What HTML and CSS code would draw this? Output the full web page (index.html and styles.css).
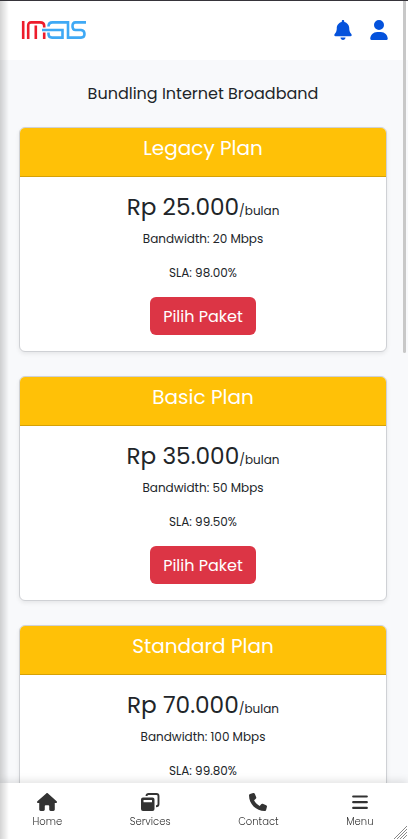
FILE: index.html
```html
<!DOCTYPE html>
<html lang="id">
<head>
<meta charset="utf-8">
<title>IMGIS</title>
<link rel="stylesheet" href="styles.css">
</head>
<body>
<header class="topbar">
  <svg class="logo" viewBox="0 0 66 20" fill="none" stroke-width="2.6">
    <g stroke="#ed1c2b"><path d="M2.2 1v18M7.200 19V5.500Q7.200 2.400 10.300 2.400H19Q23.200 2.400 23.200 6V7.500M14.800 5.500V19M23.200 12.500v6.500"/></g>
    <g stroke="#3fa9f5"><path d="M43 2.400H31.500Q27.500 2.400 27.500 6.500M27.500 12.500V14Q27.500 17.600 31 17.600H41.500V10H21M43 2.400H47V17.600H60Q63.500 17.600 63.500 14T60 10H54.500Q51.500 10 51.500 6.200T54.500 2.400H65"/></g>
  </svg>
  <div class="actions">
    <svg class="bell" viewBox="0 0 448 512"><path d="M224 0c-17.700 0-32 14.300-32 32V51.200C119 66 64 130.600 64 208v18.800c0 47-17.300 92.400-48.500 127.600l-7.400 8.300c-8.400 9.400-10.400 22.900-5.300 34.400S19.400 416 32 416H416c12.600 0 24-7.400 29.200-18.900s3.100-25-5.300-34.400l-7.400-8.300C401.300 319.200 384 273.900 384 226.800V208c0-77.400-55-142-128-156.800V32c0-17.700-14.300-32-32-32zm45.300 493.300c12-12 18.700-28.300 18.700-45.300H160c0 17 6.700 33.300 18.700 45.300s28.300 18.700 45.300 18.700s33.300-6.700 45.300-18.700z"/></svg>
    <svg class="user" viewBox="0 0 448 512"><path d="M224 256A128 128 0 1 0 224 0a128 128 0 1 0 0 256zm-45.700 48C79.800 304 0 383.800 0 482.300C0 498.700 13.300 512 29.700 512H418.300c16.400 0 29.700-13.300 29.700-29.700C448 383.800 368.200 304 269.700 304H178.300z"/></svg>
  </div>
</header>
<main class="content">
  <h1 class="title">Bundling Internet Broadband</h1>
  <section class="card">
    <h2 class="card-header">Legacy Plan</h2>
    <div class="card-body">
      <p class="price">Rp 25.000<small>/bulan</small></p>
      <p class="spec">Bandwidth: 20 Mbps</p>
      <p class="spec sla">SLA: 98.00%</p>
      <button class="btn">Pilih Paket</button>
    </div>
  </section>
  <section class="card">
    <h2 class="card-header">Basic Plan</h2>
    <div class="card-body">
      <p class="price">Rp 35.000<small>/bulan</small></p>
      <p class="spec">Bandwidth: 50 Mbps</p>
      <p class="spec sla">SLA: 99.50%</p>
      <button class="btn">Pilih Paket</button>
    </div>
  </section>
  <section class="card">
    <h2 class="card-header">Standard Plan</h2>
    <div class="card-body">
      <p class="price">Rp 70.000<small>/bulan</small></p>
      <p class="spec">Bandwidth: 100 Mbps</p>
      <p class="spec sla">SLA: 99.80%</p>
    </div>
  </section>
</main>
<nav class="bottom-nav">
  <a><svg viewBox="0 0 576 512"><path d="M575.800 255.500c0 18-15 32.100-32 32.100h-32l.7 160.200c0 2.700-.2 5.400-.5 8.100V472c0 22.100-17.900 40-40 40H392c-22.100 0-40-17.900-40-40V376c0-17.700-14.300-24-32-24H256c-17.700 0-32 6.300-32 24v96c0 22.100-17.900 40-40 40H104c-22.100 0-40-17.900-40-40V287.600H32c-18 0-32-14-32-32.100c0-9 3-17 10-24L266.400 8c7-7 15-8 22-8s15 2 21 7L564.800 231.500c8 7 12 15 11 24z"/></svg><span>Home</span></a>
  <a><svg viewBox="0 0 20 18"><path fill-rule="evenodd" d="M3 4.500H12.500q2 0 2 2V16q0 2-2 2H3q-2 0-2-2V6.500q0-2 2-2zM3.500 7v2.200h8.500V7z"/><path d="M6.500 3V2.800Q6.700 1 8.500 1H16.500q2 0 2 2V11q0 2.300-2.500 2.300" fill="none" stroke="#333" stroke-width="1.900"/></svg><span>Services</span></a>
  <a><svg viewBox="0 0 512 512"><path d="M164.900 24.600c-7.700-18.600-28-28.500-47.400-23.200l-88 24C12.100 30.200 0 46 0 64C0 311.400 200.600 512 448 512c18 0 33.800-12.100 38.600-29.500l24-88c5.300-19.400-4.600-39.700-23.200-47.400l-96-40c-16.300-6.800-35.200-2.100-46.300 11.600L304.700 368C234.300 334.700 177.300 277.700 144 207.300L193.300 167c13.700-11.200 18.400-30 11.600-46.300l-40-96z"/></svg><span>Contact</span></a>
  <a><svg viewBox="0 0 20 18"><path d="M3.200 3.500H16.800M3.200 9.200H16.800M3.200 14.900H16.800" stroke="#333" stroke-width="2.200" stroke-linecap="round"/></svg><span>Menu</span></a>
</nav>
<div class="edge"></div>
<div class="scrollbar"></div>
<svg class="grip" viewBox="0 0 14 14"><path d="M1 14 14 1M4 14 14 4M7 14 14 7M10 14 14 10" stroke="#888"/></svg>
</body>
</html>
```
FILE: styles.css
```css
* { box-sizing: border-box; }
html, body { margin: 0; height: 100%; overflow: hidden; }
body {
  background: #f8f9fb;
  color: #212529;
  font-family: Poppins, Inter, sans-serif;
  font-size: 16px;
}
h1, h2, p { margin: 0; font-weight: 400; white-space: nowrap; }
.topbar {
  height: 60px;
  padding: 0 20.5px 0 20px;
  display: flex;
  justify-content: space-between;
  align-items: center;
  background: #fff;
  border-top: 1px solid #36343a;
}
.logo { width: 66px; height: 20px; margin: -1px 0 0 1px; }
.actions { display: flex; gap: 17.5px; margin-top: -2px; }
.actions svg { width: 18px; height: 20px; fill: #0452dc; }
.content { padding: 0 21px 0 19px; }
.title { padding: 22px 0 0; height: 67px; text-align: center; font-size: 16px; line-height: 24px; }
.card {
  height: 225px;
  margin-bottom: 24px;
  background: #fff;
  border: 1px solid #cfd1d5;
  border-radius: 6px;
  box-shadow: 0 2px 4px rgba(0, 0, 0, .075);
  text-align: center;
  overflow: hidden;
}
.card-header {
  height: 49px;
  padding-top: 8px;
  background: #ffc107;
  border-bottom: 1px solid #d6a106;
  color: #fff;
  font-size: 20px;
  line-height: 24px;
}
.card-body { padding-top: 16px; }
.price { height: 28px; font-size: 23.2px; line-height: 28px; }
.price small { font-size: 12px; }
.spec { margin-top: 9px; font-size: 12px; line-height: 18px; }
.sla { margin-top: 16px; }
.btn {
  width: 106px;
  height: 38px;
  margin-top: 15px;
  padding: 0;
  border: 0;
  border-radius: 6px;
  background: #dc3545;
  color: #fff;
  font: inherit;
  white-space: nowrap;
}
.bottom-nav {
  position: fixed;
  left: 0;
  right: 0;
  bottom: 0;
  height: 56px;
  padding: 10px 34.5px 0 32.5px;
  display: flex;
  justify-content: space-between;
  background: #fff;
  box-shadow: 0 -2px 8px rgba(0, 0, 0, .12);
}
.bottom-nav a { display: flex; flex-direction: column; align-items: center; color: #333; font-size: 10px; line-height: 16px; font-weight: 300; }
.bottom-nav svg { width: 20px; height: 18px; margin-bottom: 3px; fill: #333; }
.edge { position: fixed; left: 0; top: 1px; bottom: 0; width: 9px; background: linear-gradient(90deg, rgba(0, 0, 0, .17), transparent); }
.scrollbar { position: fixed; left: 403px; top: 1px; width: 3px; height: 352px; background: #c8c8c8; border-radius: 0 0 2px 2px; }
.grip { position: fixed; right: 1px; bottom: 0; width: 14px; height: 14px; }
```
